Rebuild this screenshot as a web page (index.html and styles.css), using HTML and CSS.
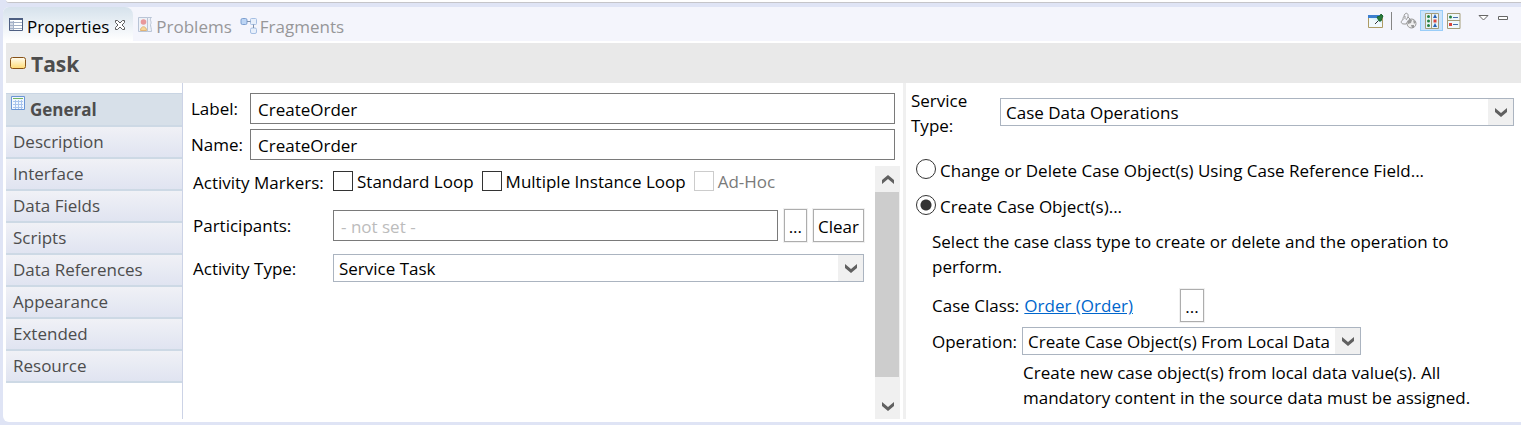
FILE: index.html
```html
<!DOCTYPE html>
<html lang="en">
<head>
<meta charset="utf-8">
<title>Properties</title>
<link rel="stylesheet" href="styles.css">
</head>
<body>
<div class="editor-edge"></div>
<main class="view">
  <header class="tabbar">
    <div class="tabs" role="tablist">
      <div class="tab tab-active">
        <svg class="icon" viewBox="0 0 16 16" width="16" height="16"><path fill="#fff" stroke="#4d5f82" d="M1.500 1.500h13v12h-13z"/><path fill="#4d5f82" d="M1 1h14v2H1z"/><path fill="#d5dbe7" d="M2 4h4v9H2z"/><path stroke="#a3b0c6" d="M2 5.500h12M2 8.500h12M2 11.500h12M5.500 4v9"/></svg>
        <button class="tab-name" role="tab" aria-selected="true">Properties</button>
        <button class="close" aria-label="Close"><svg viewBox="0 0 12 12" width="12" height="12"><path fill="#fff" stroke="#5c5c5c" d="M1.500 1.500h2L6 4l2.500-2.500h2v2L8 6l2.500 2.500v2h-2L6 8l-2.500 2.500h-2v-2L4 6 1.500 3.500z"/></svg></button>
      </div>
      <div class="tab">
        <svg class="icon" viewBox="0 0 16 16" width="16" height="16"><path fill="#eef1f7" stroke="#b9c4d6" d="M1.500.500h9v14h-9zM10.500.500h4c-3 2 1 4-1 7 0 2 1 4 1 7h-4"/><circle cx="6.500" cy="5" r="2.800" fill="#e8989a"/><path fill="#f7d79a" stroke="#e1b477" d="M3.500 13.500c0-5 6-5 6 0z"/></svg>
        <button class="tab-name" role="tab">Problems</button>
      </div>
      <div class="tab">
        <svg class="icon" viewBox="0 0 17 17" width="17" height="17"><g fill="#e7effb" stroke="#a6bfe3"><rect x="1" y="1.500" width="6" height="6" rx="1.500" fill="#bdd5f4" stroke="#7d9fd0"/><rect x="10.500" y="1.500" width="6" height="6" rx="1"/><rect x="10.500" y="11" width="6" height="5.500" rx="1.500"/><path stroke="#8091aa" d="M7 4.500h3.500M13.500 7.500v3.500"/></g></svg>
        <button class="tab-name" role="tab">Fragments</button>
      </div>
    </div>
    <div class="tools">
      <button class="tool" aria-label="Pin"><svg viewBox="0 0 18 18" width="18" height="18"><path fill="#d9f1fb" stroke="#ad9b64" d="M1.500 3.500h14v12h-14z"/><path fill="#fff" d="M2 6l13 5v4H2z" opacity=".6"/><path fill="#3c7fd0" d="M1 3h12v3H1z"/><path stroke="#333" d="M8 12l3-3"/><path fill="#287b3a" stroke="#1c6530" d="M10 5l3-1 1-2 2 2-1 2-1 3-2 0z"/></svg></button>
      <span class="divider"></span>
      <button class="tool" aria-label="Show advanced"><svg viewBox="0 0 18 18" width="18" height="18" fill="#f4f5fc" stroke="#989898"><path d="M4 12c-4 0-3-4-1-4 0-2 0-3 1-3 0-5 5-5 4 0l2 2-4 5z"/><path fill="none" d="M5 4v3M8 5l-2 3"/><circle cx="11.500" cy="11.500" r="4.500" fill="#eee"/><path fill="#999" stroke="none" d="M8 9l2-2 2 1-1 3-3 1zM13 8l3 2-2 2zM11 13l3 0 0 3-2 0z"/></svg></button>
      <button class="tool tool-on" aria-label="Show categories"><svg viewBox="0 0 14 16" width="14" height="16"><path fill="#e9f3f7" stroke="#a39d79" d="M.500.500h13v15H.500zM6.500 1v14"/><circle cx="3.500" cy="3.500" r="1.500" fill="#238243"/><circle cx="3.500" cy="8" r="1.500" fill="#238243"/><circle cx="3.500" cy="12.500" r="1.500" fill="#238243"/><path fill="#2762b5" d="M8 5l2-4 2 4zM8 14l2-4 2 4z"/><path fill="#d9453d" d="M8.500 6.500h3v3h-3z"/></svg></button>
      <button class="tool" aria-label="Show list"><svg viewBox="0 0 14 16" width="14" height="16"><path fill="#eff8fb" stroke="#a39d79" d="M.500.500h12.500v15H.500zM0 7.500h13"/><circle cx="3.500" cy="4" r="1.500" fill="#238243"/><path fill="#d9453d" d="M2 10h3v3H2z"/><path stroke="#456daa" d="M6 4.500h5M6 11.500h5"/></svg></button>
      <button class="tool tool-menu" aria-label="View menu"><svg viewBox="0 0 11 8" width="11" height="8"><path fill="#fff" stroke="#666" d="M1 1.500h9L5.500 6z"/></svg></button>
      <button class="tool tool-min" aria-label="Minimize"><svg viewBox="0 0 11 8" width="11" height="8"><path fill="#fff" stroke="#666" d="M.500 2.500h9v3h-9z"/></svg></button>
    </div>
  </header>

  <div class="heading">
    <svg viewBox="0 0 16 12" width="16" height="12"><defs><linearGradient id="taskFill" x2="0" y2="1"><stop stop-color="#fffdf2"/><stop offset="1" stop-color="#ffda73"/></linearGradient></defs><rect x=".500" y=".500" width="15" height="11" rx="2" fill="url(#taskFill)" stroke="#875116"/></svg>
    <h1>Task</h1>
  </div>

  <div class="body">
    <nav class="sections">
      <button class="section section-on"><svg viewBox="0 0 14 14" width="14" height="14"><path fill="#f3f8ff" stroke="#6b96d6" d="M.500.500h13v13H.500z"/><path stroke="#73b565" d="M2 2.500h10"/><path stroke="#a9c4ed" fill="none" d="M2 5.500h10M2 8.500h10M2 11.500h10M4.500 4v9M7.500 4v9M10.500 4v9"/></svg>General</button>
      <button class="section">Description</button>
      <button class="section">Interface</button>
      <button class="section">Data Fields</button>
      <button class="section">Scripts</button>
      <button class="section">Data References</button>
      <button class="section">Appearance</button>
      <button class="section">Extended</button>
      <button class="section">Resource</button>
    </nav>

    <section class="general">
      <div class="names">
        <label for="label">Label:</label><input class="text" id="label" type="text" value="CreateOrder">
        <label for="name">Name:</label><input class="text" id="name" type="text" value="CreateOrder">
      </div>
      <div class="scroller">
        <div class="details">
          <span>Activity Markers:</span>
          <div class="markers">
            <label class="check"><input type="checkbox">Standard Loop</label>
            <label class="check"><input type="checkbox">Multiple Instance Loop</label>
            <label class="check check-off"><input type="checkbox" disabled>Ad-Hoc</label>
          </div>
          <label for="participants">Participants:</label>
          <div class="participants">
            <input class="text" id="participants" type="text" placeholder="- not set -">
            <button class="push" aria-label="Browse participants">...</button>
            <button class="push">Clear</button>
          </div>
          <label for="activity-type">Activity Type:</label>
          <div class="combo">
            <select id="activity-type"><option>Service Task</option></select>
            <svg class="chevron" viewBox="0 0 12 9" width="12" height="9"><path d="M0 0l6 5 6-5v4L6 9 0 4z"/></svg>
          </div>
        </div>
        <div class="scrollbar">
          <button aria-label="Scroll up"><svg class="chevron" viewBox="0 0 12 9" width="12" height="9"><path d="M0 9l6-5 6 5V5L6 0 0 5z"/></svg></button>
          <div class="track"><div class="thumb"></div></div>
          <button aria-label="Scroll down"><svg class="chevron" viewBox="0 0 12 9" width="12" height="9"><path d="M0 0l6 5 6-5v4L6 9 0 4z"/></svg></button>
        </div>
      </div>
    </section>

    <div class="sash"></div>

    <section class="service">
      <div class="service-type">
        <label for="service-type">Service Type:</label>
        <div class="combo">
          <select id="service-type"><option>Case Data Operations</option></select>
          <svg class="chevron" viewBox="0 0 12 9" width="12" height="9"><path d="M0 0l6 5 6-5v4L6 9 0 4z"/></svg>
        </div>
      </div>
      <label class="radio"><input type="radio" name="mode"><span>Change or Delete Case Object(s) Using Case Reference Field...</span></label>
      <label class="radio"><input type="radio" name="mode" checked><span>Create Case Object(s)...</span></label>
      <div class="create">
        <p>Select the case class type to create or delete and the operation to perform.</p>
        <div class="case-class">
          <span>Case Class:</span>
          <a href="#">Order (Order)</a>
          <button class="push" aria-label="Browse case classes">...</button>
        </div>
        <div class="operation">
          <label for="operation">Operation:</label>
          <div class="combo">
            <select id="operation"><option>Create Case Object(s) From Local Data</option></select>
            <svg class="chevron" viewBox="0 0 12 9" width="12" height="9"><path d="M0 0l6 5 6-5v4L6 9 0 4z"/></svg>
          </div>
        </div>
        <p class="hint">Create new case object(s) from local data value(s). All mandatory content in the source data must be assigned.</p>
      </div>
    </section>
  </div>
</main>
</body>
</html>
```

FILE: styles.css
```css
* { box-sizing: border-box; }

body {
  margin: 0;
  min-height: 100vh;
  display: flex;
  flex-direction: column;
  padding: 0 0 3px 3px;
  background: #dfe4f5;
  color: #000;
  font: 17px/25px "Open Sans", "Noto Sans", sans-serif;
}

button, input, select { font: inherit; color: inherit; }
button { margin: 0; padding: 0; border: 0; background: none; }
svg { display: block; flex: none; }
p { margin: 0; }

.editor-edge {
  height: 3px;
  margin-left: 3px;
  background: #fff;
  border-bottom: 1px solid #c5c5c9;
  border-radius: 0 0 0 6px;
}

.view {
  flex: 1;
  display: flex;
  flex-direction: column;
  margin-top: 4px;
  padding: 0 0 3px 3px;
  background: #fff;
  border-radius: 6px 0 0 6px;
}

/* Tabs and view toolbar */
.tabbar {
  display: flex;
  justify-content: space-between;
  height: 34px;
  margin-left: -3px;
  background: #f4f5fc;
  border-radius: 6px 0 0 0;
}
.tabs { display: flex; }
.tab { display: flex; align-items: center; gap: 3px; padding: 4px 0 0 5px; color: #979799; }
.tab + .tab { padding-left: 4px; }
.tab + .tab + .tab { padding-left: 8px; }
.tab .icon { margin-bottom: 2px; }
.tab-active {
  color: #000;
  padding-right: 7px;
  background: linear-gradient(#d6e2ec, #fff);
  border-radius: 6px 8px 0 0;
}
.close { margin: 0 0 2px 2px; }

.tools { display: flex; align-items: center; padding: 0 12px 7px 0; }
.tool { height: 21px; display: flex; align-items: center; justify-content: center; }
.divider { width: 1px; height: 18px; margin: 0 8px 0 6px; background: #858585; }
.tool-on { width: 23px; margin: 0 4px 0 2px; background: #cce4fb; border: 1px solid #99cdf8; }
.tool-menu { margin-left: 17px; padding-bottom: 6px; }
.tool-min { margin-left: 9px; padding-bottom: 6px; }

/* Heading */
.heading {
  display: flex;
  align-items: center;
  gap: 5px;
  height: 40px;
  margin-top: 2px;
  padding-left: 4px;
  background: #e9e9e9;
}
.heading h1 { margin: 2px 0 0; font-size: 21px; line-height: 30px; color: #4d4d4d; }

.body {
  flex: 1;
  display: grid;
  grid-template-columns: 177px minmax(0, 720fr) 3px minmax(0, 615fr);
}

/* Section list */
.sections { padding-top: 10px; border-right: 1px solid #ccd3e6; }
.section {
  display: flex;
  align-items: center;
  width: 100%;
  height: 32px;
  padding: 0 0 1px 7px;
  border-bottom: 2px solid #cdd9e5;
  background: linear-gradient(#f0f1f6, #e0e4f1);
  color: #4d4d4d;
}
.section-on {
  height: 34px;
  gap: 5px;
  padding: 0 0 0 5px;
  border-top: 1px solid #c9d5e3;
  background: #d7e0e9;
  font-weight: bold;
}
.section-on svg { margin-bottom: 13px; }

/* Centre pane */
.general { display: flex; flex-direction: column; gap: 6px; padding: 10px 3px 0 8px; }
.names {
  display: grid;
  grid-template-columns: 59px 1fr;
  row-gap: 5px;
  align-items: center;
  padding-right: 5px;
}
.text {
  width: 100%;
  min-width: 0;
  height: 31px;
  padding: 2px 7px 0;
  border: 1px solid #7a7a7a;
  border-radius: 0;
  background: #fff;
}
.text::placeholder { color: #bcbcbc; opacity: 1; }

.scroller { flex: 1; display: flex; gap: 11px; }
.details {
  flex: 1;
  display: grid;
  grid-template-columns: 140px 1fr;
  grid-template-rows: 33px 33px 32px;
  row-gap: 10px;
  align-content: start;
  align-items: center;
  padding-left: 2px;
}
.markers { display: flex; gap: 8px; padding-bottom: 3px; }
.check { display: flex; align-items: center; gap: 4px; }
.check input {
  appearance: none;
  width: 20px;
  height: 20px;
  margin: 0;
  border: 1px solid #333;
  background: #fff;
}
.check-off { color: #7a7a7a; }
.check-off input { border-color: #ccc; }

.participants { display: flex; align-items: center; gap: 6px; }
.participants .text { flex: 1; }
.push {
  flex: none;
  height: 33px;
  padding: 1px 4px 0;
  border: 1px solid #adadad;
  background: #fff;
  box-shadow: 0 0 0 1px #f0f0f0;
}

.combo { display: grid; grid-template-columns: 1fr 26px; align-items: center; }
.combo select {
  grid-area: 1 / 1 / 2 / 3;
  appearance: none;
  width: 100%;
  height: 28px;
  padding: 0 30px 0 5px;
  border: 1px solid #abb4c0;
  border-radius: 0;
  background: linear-gradient(#f0f0f0, #f0f0f0) right / 25px 100% no-repeat #fff;
}
.combo .chevron { grid-area: 1 / 2; justify-self: center; pointer-events: none; }
.chevron { fill: #606060; }

.scrollbar { width: 25px; display: flex; flex-direction: column; background: #f0f0f0; }
.scrollbar button { height: 26px; display: flex; align-items: center; justify-content: center; }
.track { flex: 1; padding-right: 1px; }
.thumb { height: 92%; background: #cdcdcd; }

.sash { background: #f0f0f0; }

/* Service pane */
.service { padding: 5px 7px 0 5px; }
.service-type { display: grid; grid-template-columns: 89px 1fr; align-items: center; margin-bottom: 21px; }
.service-type label { width: 70px; }
.service-type .combo { padding-bottom: 2px; }
.radio { display: flex; align-items: center; gap: 4px; height: 20px; margin: 0 0 16px 5px; }
.radio span { padding-top: 2px; }
.radio input {
  appearance: none;
  flex: none;
  width: 20px;
  height: 20px;
  margin: 0;
  border: 1px solid #333;
  border-radius: 50%;
  background: #fff;
}
.radio input:checked { background: radial-gradient(circle, #333 5px, #fff 6px); }

.create { margin-top: -2px; padding-left: 21px; }
.case-class { display: flex; align-items: center; gap: 5px; margin: 10px 0 5px; }
.case-class a { width: 151px; color: #0066cc; }
.operation { display: grid; grid-template-columns: 90px max-content; align-items: center; margin-bottom: 5px; }
.hint { padding-left: 91px; }
```
